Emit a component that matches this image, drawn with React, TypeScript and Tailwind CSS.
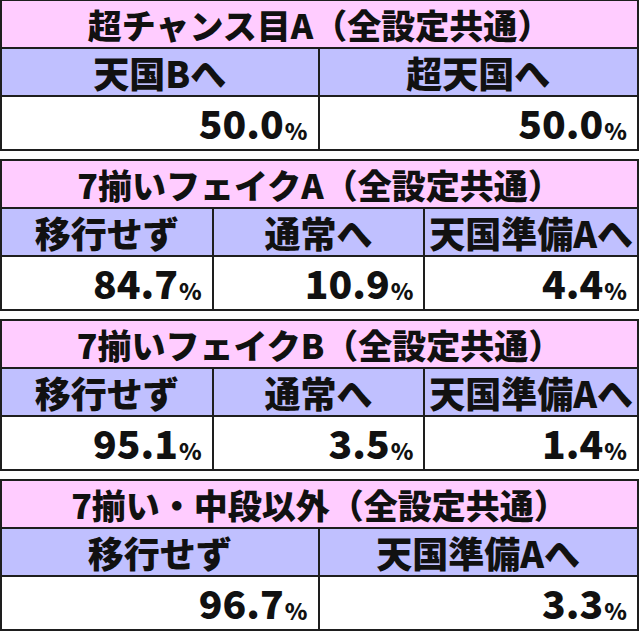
type Cell = { label: string; value: string };

type RateTable = {
  title: string;
  cells: Cell[];
};

const tables: RateTable[] = [
  {
    title: '超チャンス目A（全設定共通）',
    cells: [
      { label: '天国Bへ', value: '50.0' },
      { label: '超天国へ', value: '50.0' },
    ],
  },
  {
    title: '7揃いフェイクA（全設定共通）',
    cells: [
      { label: '移行せず', value: '84.7' },
      { label: '通常へ', value: '10.9' },
      { label: '天国準備Aへ', value: '4.4' },
    ],
  },
  {
    title: '7揃いフェイクB（全設定共通）',
    cells: [
      { label: '移行せず', value: '95.1' },
      { label: '通常へ', value: '3.5' },
      { label: '天国準備Aへ', value: '1.4' },
    ],
  },
  {
    title: '7揃い・中段以外（全設定共通）',
    cells: [
      { label: '移行せず', value: '96.7' },
      { label: '天国準備Aへ', value: '3.3' },
    ],
  },
];

function RateBlock({ table }: { table: RateTable }) {
  const cols = table.cells.length === 3 ? 'grid-cols-3' : 'grid-cols-2';

  return (
    <div className="border-2 border-[#1e1e1e]">
      <div className="flex h-[48px] items-center justify-center border-b-2 border-[#1e1e1e] bg-[#ffccff] pt-[2px] text-[34px] leading-none">
        {table.title}
      </div>
      <div className={`grid ${cols} divide-x-2 divide-[#1e1e1e] border-b-2 border-[#1e1e1e] bg-[#c0c0ff]`}>
        {table.cells.map((cell, i) => (
          <div key={i} className="flex h-[46px] items-center justify-center whitespace-nowrap text-[36px] leading-none">
            {cell.label}
          </div>
        ))}
      </div>
      <div className={`grid ${cols} divide-x-2 divide-[#1e1e1e] bg-white`}>
        {table.cells.map((cell, i) => (
          <div key={i} className="flex h-[52px] items-end justify-end pb-[7px] pr-[10px] leading-none">
            <span className="text-[39px]">{cell.value}</span>
            <span className="ml-[1px] text-[23px]">%</span>
          </div>
        ))}
      </div>
    </div>
  );
}

export default function App() {
  return (
    <div
      className="-mt-px flex w-[640px] flex-col gap-[8px] bg-white pr-px font-black text-[#111]"
      style={{ fontFamily: '"Noto Sans CJK JP", "Noto Sans", sans-serif' }}
    >
      {tables.map((table, i) => (
        <RateBlock key={i} table={table} />
      ))}
    </div>
  );
}
